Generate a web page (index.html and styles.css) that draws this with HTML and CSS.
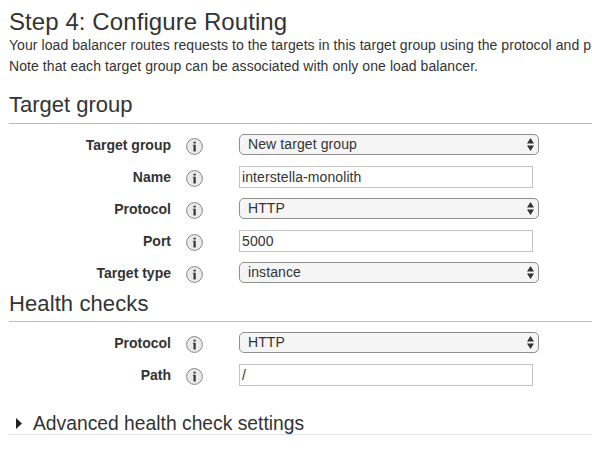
FILE: index.html
```html
<!DOCTYPE html>
<html lang="en">
<head>
<meta charset="utf-8">
<title>Configure Routing</title>
<link rel="stylesheet" href="styles.css">
</head>
<body>
<svg class="defs" width="0" height="0" aria-hidden="true">
  <symbol id="info" viewBox="0 0 17 17"><circle cx="8.5" cy="8.5" r="7.9" fill="#ebebeb" stroke="#858585"/><path fill="#333" d="M7.5 3.7h2.2v1.8H7.5zM6.8 6.7h2.9v6.8H7.5V7.6H6.8z"/></symbol>
  <symbol id="arrows" viewBox="0 0 7 13"><path fill="#333" d="M3.5 0L7 5.5H0zM0 7.5h7L3.5 13z"/></symbol>
</svg>
<main class="page">
  <h1 class="title">Step 4: Configure Routing</h1>
  <p class="intro">Your load balancer routes requests to the targets in this target group using the protocol and p</p>
  <p class="intro">Note that each target group can be associated with only one load balancer.</p>

  <h2 class="section first">Target group</h2>
  <div class="rows">
    <div class="row"><span class="label">Target group</span><svg class="info"><use href="#info"/></svg><div class="select"><span>New target group</span><svg class="arrows"><use href="#arrows"/></svg></div></div>
    <div class="row"><span class="label">Name</span><svg class="info"><use href="#info"/></svg><div class="input">interstella-monolith</div></div>
    <div class="row"><span class="label">Protocol</span><svg class="info"><use href="#info"/></svg><div class="select"><span>HTTP</span><svg class="arrows"><use href="#arrows"/></svg></div></div>
    <div class="row"><span class="label">Port</span><svg class="info"><use href="#info"/></svg><div class="input">5000</div></div>
    <div class="row"><span class="label">Target type</span><svg class="info"><use href="#info"/></svg><div class="select"><span>instance</span><svg class="arrows"><use href="#arrows"/></svg></div></div>
  </div>

  <h2 class="section health">Health checks</h2>
  <div class="rows">
    <div class="row"><span class="label">Protocol</span><svg class="info"><use href="#info"/></svg><div class="select"><span>HTTP</span><svg class="arrows"><use href="#arrows"/></svg></div></div>
    <div class="row"><span class="label">Path</span><svg class="info"><use href="#info"/></svg><div class="input">/</div></div>
  </div>

  <h3 class="advanced"><svg class="caret" viewBox="0 0 6 11"><path fill="#222" d="M0 0l6 5.5L0 11z"/></svg><span>Advanced health check settings</span></h3>
</main>
</body>
</html>
```
FILE: styles.css
```css
* { box-sizing: border-box; }
body {
  margin: 0;
  overflow: hidden;
  background: #fff;
  color: #333;
  font: 14px/21px "Liberation Sans", Arial, sans-serif;
}
h1, h2, h3, p { margin: 0; font-weight: 400; }
.defs { position: absolute; }
.page { padding: 9px 0 0 9px; white-space: nowrap; }
.title { font-size: 24px; line-height: 26px; letter-spacing: 0.08px; }
.intro { letter-spacing: 0.07px; }
.section {
  font-size: 22px;
  line-height: 28px;
  padding-bottom: 4px;
  border-bottom: 1px solid #bbb;
}
.first { margin-top: 14px; }
.health {
  padding: 1px 0 3px;
  letter-spacing: 0.1px;
}
.rows { padding-top: 5px; }
.row { display: flex; align-items: flex-start; height: 32px; }
.label {
  width: 162px;
  padding-top: 6px;
  text-align: right;
  font-weight: 700;
}
.info { width: 17px; height: 17px; margin: 9px 36px 0 15px; }
.select {
  display: flex;
  justify-content: space-between;
  width: 300px;
  height: 21px;
  margin-top: 5px;
  padding: 0 4px 0 8px;
  border: 1px solid #8f8f8f;
  border-radius: 5px;
  background: #f5f5f5;
  line-height: 19px;
  letter-spacing: 0.1px;
}
.arrows { width: 7px; height: 13px; margin-top: 3px; }
.input {
  width: 294px;
  height: 22px;
  margin-top: 5px;
  padding-left: 2px;
  border: 1px solid #c4c4c4;
  line-height: 20px;
  letter-spacing: 0.1px;
}
.advanced {
  display: flex;
  align-items: center;
  height: 23px;
  margin-top: 21px;
  border-bottom: 1px solid #e3e3e3;
  font-size: 19.3px;
  line-height: 22px;
}
.advanced span { padding-top: 2px; }
.caret { width: 6px; height: 11px; margin: 0 11px 0 7px; }
```
